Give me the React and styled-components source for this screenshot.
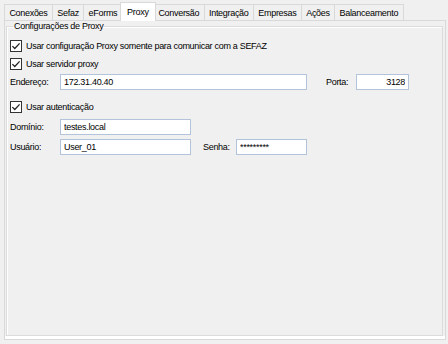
import React from 'react';
import styled, { createGlobalStyle } from 'styled-components';

const Global = createGlobalStyle`
  html, body { margin: 0; padding: 0; background: #f0f0f0; }
  body {
    font-family: "Liberation Sans", Arial, sans-serif;
    font-size: 9px;
    color: #000;
  }
`;

const Window = styled.div`
  width: 448px;
  height: 344px;
  box-sizing: border-box;
  padding: 2px 2px 4px 4px;
  display: flex;
  flex-direction: column;
  letter-spacing: -0.3px;
`;

const TabStrip = styled.div`
  display: flex;
  align-items: flex-end;
  height: 18px;
  flex: none;
  position: relative;
  z-index: 1;
`;

const Tab = styled.div`
  box-sizing: border-box;
  height: ${(p) => (p.$active ? '19px' : '16px')};
  padding: 0 ${(p) => (p.$active ? '6.4px' : '4.4px')};
  margin: 0 ${(p) => (p.$active ? '-2px' : '0')} ${(p) => (p.$active ? '-1px' : '0')}
    ${(p) => (p.$active ? '-3px' : '-1px')};
  border: 1px solid #d9d9d9;
  border-bottom: none;
  background: ${(p) => (p.$active ? '#ffffff' : '#f0f0f0')};
  display: flex;
  align-items: center;
  white-space: nowrap;
  position: relative;
  z-index: ${(p) => (p.$active ? 2 : 1)};
  &:first-child { margin-left: 0; }
`;

const Panel = styled.div`
  flex: 1;
  border: 1px solid #d9d9d9;
  background: #f0f0f0;
  box-shadow: inset 0 -3px 0 #ffffff;
  padding: 0 2px 3px 1px;
  display: flex;
  flex-direction: column;
`;

const GroupBox = styled.fieldset`
  flex: 1;
  min-width: 0;
  margin: 0;
  padding: 0 0 0 3px;
  border: 1px solid #dcdcdc;
  box-shadow: inset 1px 1px 0 #ffffff;
`;

const Legend = styled.legend`
  padding: 0 1px;
  margin-left: 3px;
  line-height: 11px;
`;

const CheckRow = styled.div`
  display: flex;
  align-items: center;
  gap: 4px;
  height: 14px;
  margin-top: ${(p) => p.$top}px;
`;

const FieldRow = styled.div`
  display: flex;
  align-items: center;
  height: 16px;
  margin-top: ${(p) => p.$top}px;
`;

const Label = styled.span`
  width: ${(p) => p.$w}px;
  margin-left: ${(p) => p.$gap || 0}px;
  flex: none;
  white-space: nowrap;
  margin-top: -1px;
`;

const TextBox = styled.input`
  box-sizing: border-box;
  width: ${(p) => p.$w}px;
  height: 16px;
  flex: none;
  margin: 0;
  padding: 0 ${(p) => (p.$right ? '3px' : '2px')} 0 3px;
  border: 1px solid #b3c3da;
  background: #ffffff;
  font: inherit;
  letter-spacing: inherit;
  color: #000;
  text-align: ${(p) => (p.$right ? 'right' : 'left')};
  outline: none;
`;

const Box = styled.svg`
  flex: none;
  display: block;
`;

function CheckBox() {
  return (
    <Box width="12" height="12" viewBox="0 0 12 12">
      <rect x="0.5" y="0.5" width="11" height="11" fill="#fff" stroke="#333" />
      <path d="M2.4 6.1 L4.8 8.5 L9.6 3.4" fill="none" stroke="#222" strokeWidth="1.3" />
    </Box>
  );
}

const tabs = ['Conexões', 'Sefaz', 'eForms', 'Proxy', 'Conversão', 'Integração', 'Empresas', 'Ações', 'Balanceamento'];

export default function App() {
  return (
    <>
      <Global />
      <Window>
        <TabStrip>
          {tabs.map((t) => (
            <Tab key={t} $active={t === 'Proxy'}>{t}</Tab>
          ))}
        </TabStrip>
        <Panel>
          <GroupBox>
            <Legend>Configurações de Proxy</Legend>
            <CheckRow $top={7}>
              <CheckBox />
              <span>Usar configuração Proxy somente para comunicar com a SEFAZ</span>
            </CheckRow>
            <CheckRow $top={4}>
              <CheckBox />
              <span>Usar servidor proxy</span>
            </CheckRow>
            <FieldRow $top={3}>
              <Label $w={50}>Endereço:</Label>
              <TextBox $w={247} defaultValue="172.31.40.40" />
              <Label $w={30} $gap={19}>Porta:</Label>
              <TextBox $w={53} $right defaultValue="3128" />
            </FieldRow>
            <CheckRow $top={10}>
              <CheckBox />
              <span>Usar autenticação</span>
            </CheckRow>
            <FieldRow $top={5}>
              <Label $w={50}>Domínio:</Label>
              <TextBox $w={131} defaultValue="testes.local" />
            </FieldRow>
            <FieldRow $top={4}>
              <Label $w={50}>Usuário:</Label>
              <TextBox $w={131} defaultValue="User_01" />
              <Label $w={33} $gap={12}>Senha:</Label>
              <TextBox $w={71} defaultValue="*********" />
            </FieldRow>
          </GroupBox>
        </Panel>
      </Window>
    </>
  );
}
